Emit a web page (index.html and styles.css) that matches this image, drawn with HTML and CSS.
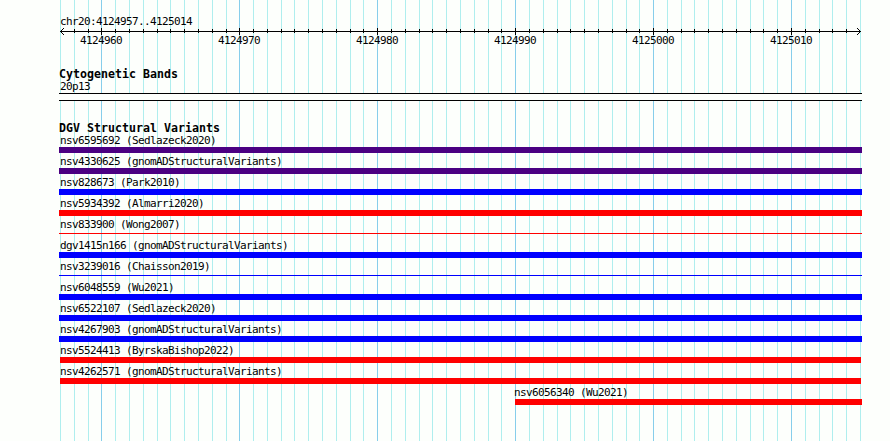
FILE: index.html
```html
<!DOCTYPE html>
<html lang="en">
  <head>
    <meta charset="utf-8" />
    <meta name="viewport" content="width=device-width, initial-scale=1" />
    <title>chr20:4124957..4125014</title>
    <link rel="stylesheet" href="styles.css">
  </head>
  <body>
    <main class="browser">
      <!-- Vertical grid, one line per base -->
      <svg class="grid" width="890" height="441" aria-hidden="true">
        <path class="grid-minor" d="M60.5 0v441M74.5 0v441M88.5 0v441M115.5 0v441M129.5 0v441M143.5 0v441M157.5 0v441M170.5 0v441M184.5 0v441M198.5 0v441M212.5 0v441M226.5 0v441M253.5 0v441M267.5 0v441M281.5 0v441M294.5 0v441M308.5 0v441M322.5 0v441M336.5 0v441M350.5 0v441M363.5 0v441M391.5 0v441M405.5 0v441M419.5 0v441M432.5 0v441M446.5 0v441M460.5 0v441M474.5 0v441M488.5 0v441M501.5 0v441M529.5 0v441M543.5 0v441M557.5 0v441M570.5 0v441M584.5 0v441M598.5 0v441M612.5 0v441M626.5 0v441M639.5 0v441M667.5 0v441M681.5 0v441M694.5 0v441M708.5 0v441M722.5 0v441M736.5 0v441M750.5 0v441M763.5 0v441M777.5 0v441M805.5 0v441M819.5 0v441M832.5 0v441M846.5 0v441M860.5 0v441" />
        <path class="grid-major" d="M101.5 0v441M239.5 0v441M377.5 0v441M515.5 0v441M653.5 0v441M791.5 0v441" />
      </svg>

      <!-- Scale -->
      <header class="scale">
        <div class="label">chr20:4124957..4125014</div>
        <svg class="ruler" width="890" height="7" aria-hidden="true">
          <path d="M60 3.5H861" />
          <path d="M74.5 1v4M88.5 1v4M115.5 1v4M129.5 1v4M143.5 1v4M157.5 1v4M170.5 1v4M184.5 1v4M198.5 1v4M212.5 1v4M226.5 1v4M253.5 1v4M267.5 1v4M281.5 1v4M294.5 1v4M308.5 1v4M322.5 1v4M336.5 1v4M350.5 1v4M363.5 1v4M391.5 1v4M405.5 1v4M419.5 1v4M432.5 1v4M446.5 1v4M460.5 1v4M474.5 1v4M488.5 1v4M501.5 1v4M529.5 1v4M543.5 1v4M557.5 1v4M570.5 1v4M584.5 1v4M598.5 1v4M612.5 1v4M626.5 1v4M639.5 1v4M667.5 1v4M681.5 1v4M694.5 1v4M708.5 1v4M722.5 1v4M736.5 1v4M750.5 1v4M763.5 1v4M777.5 1v4M805.5 1v4M819.5 1v4M832.5 1v4M846.5 1v4" />
          <path d="M101.5 0v7M239.5 0v7M377.5 0v7M515.5 0v7M653.5 0v7M791.5 0v7" />
          <path d="M60 3.5h1M61 2.5h1M62 1.5h1M63 .5h1M61 4.5h1M62 5.5h1M63 6.5h1" />
          <path d="M860 3.5h1M859 2.5h1M858 1.5h1M857 .5h1M859 4.5h1M858 5.5h1M857 6.5h1" />
        </svg>
        <div class="ticks">
          <span>4124960</span>
          <span>4124970</span>
          <span>4124980</span>
          <span>4124990</span>
          <span>4125000</span>
          <span>4125010</span>
        </div>
      </header>

      <!-- Cytogenetic bands -->
      <section class="track">
        <h2 class="track-title">Cytogenetic Bands</h2>
        <div class="label">20p13</div>
        <div class="band"></div>
      </section>

      <!-- Structural variants -->
      <section class="track">
        <h2 class="track-title">DGV Structural Variants</h2>
        <div class="variant">
          <div class="label">nsv6595692 (Sedlazeck2020)</div>
          <div class="bar indigo"></div>
        </div>
        <div class="variant">
          <div class="label">nsv4330625 (gnomADStructuralVariants)</div>
          <div class="bar indigo"></div>
        </div>
        <div class="variant">
          <div class="label">nsv828673 (Park2010)</div>
          <div class="bar blue"></div>
        </div>
        <div class="variant">
          <div class="label">nsv5934392 (Almarri2020)</div>
          <div class="bar red"></div>
        </div>
        <div class="variant">
          <div class="label">nsv833900 (Wong2007)</div>
          <div class="bar thin red"></div>
        </div>
        <div class="variant">
          <div class="label">dgv1415n166 (gnomADStructuralVariants)</div>
          <div class="bar blue"></div>
        </div>
        <div class="variant">
          <div class="label">nsv3239016 (Chaisson2019)</div>
          <div class="bar thin blue"></div>
        </div>
        <div class="variant">
          <div class="label">nsv6048559 (Wu2021)</div>
          <div class="bar blue"></div>
        </div>
        <div class="variant">
          <div class="label">nsv6522107 (Sedlazeck2020)</div>
          <div class="bar blue"></div>
        </div>
        <div class="variant">
          <div class="label">nsv4267903 (gnomADStructuralVariants)</div>
          <div class="bar blue"></div>
        </div>
        <div class="variant">
          <div class="label">nsv5524413 (ByrskaBishop2022)</div>
          <div class="bar inner red"></div>
        </div>
        <div class="variant">
          <div class="label">nsv4262571 (gnomADStructuralVariants)</div>
          <div class="bar inner red"></div>
        </div>
        <div class="variant partial">
          <div class="label">nsv6056340 (Wu2021)</div>
          <div class="bar red"></div>
        </div>
      </section>
    </main>
  </body>
</html>
```

FILE: styles.css
```css
body {
  margin: 0;
  background: #fdfffc;
}

.browser {
  position: relative;
  z-index: 0;
  box-sizing: border-box;
  width: 890px;
  height: 441px;
  padding-top: 15px;
  overflow: hidden;
  color: #000;
  font-family: "DejaVu Sans Mono", monospace;
  font-size: 11px;
  line-height: 13px;
  letter-spacing: -0.622px;
  white-space: nowrap;
}

/* Grid behind the tracks */
.grid {
  position: absolute;
  top: 0;
  left: 0;
  z-index: -1;
  fill: none;
  shape-rendering: crispEdges;
}

.grid-minor {
  stroke: #afeeee;
}

.grid-major {
  stroke: #87ceeb;
}

.label {
  height: 13px;
  padding-left: 60px;
}

/* Scale */
.scale {
  height: 53px;
}

.ruler {
  display: block;
  height: 6px;
  overflow: visible;
  fill: none;
  stroke: #000;
  shape-rendering: crispEdges;
}

.ticks {
  display: flex;
  gap: 96px;
  padding-left: 80px;
}

.ticks span {
  width: 42px;
}

/* Tracks */
.track {
  margin-bottom: 21px;
}

.track-title {
  height: 12px;
  margin: 0;
  padding-left: 59px;
  font-size: 11.6px;
  font-weight: bold;
  line-height: 12px;
  letter-spacing: 0.016px;
}

.band {
  box-sizing: border-box;
  height: 8px;
  margin: 0 28px 0 59px;
  background: #fdfffc;
  border: solid #000;
  border-width: 1px 0;
}

.variant {
  height: 21px;
}

.bar {
  height: 6px;
  margin: 0 28px 0 59px;
}

.bar.inner {
  margin: 0 29px 0 60px;
}

.bar.thin {
  height: 1px;
  margin-top: 2px;
}

.partial .label {
  padding-left: 514px;
}

.partial .bar {
  margin-left: 515px;
}

.indigo {
  background: #4b0082;
}

.blue {
  background: #0000ff;
}

.red {
  background: #ff0000;
}
```
